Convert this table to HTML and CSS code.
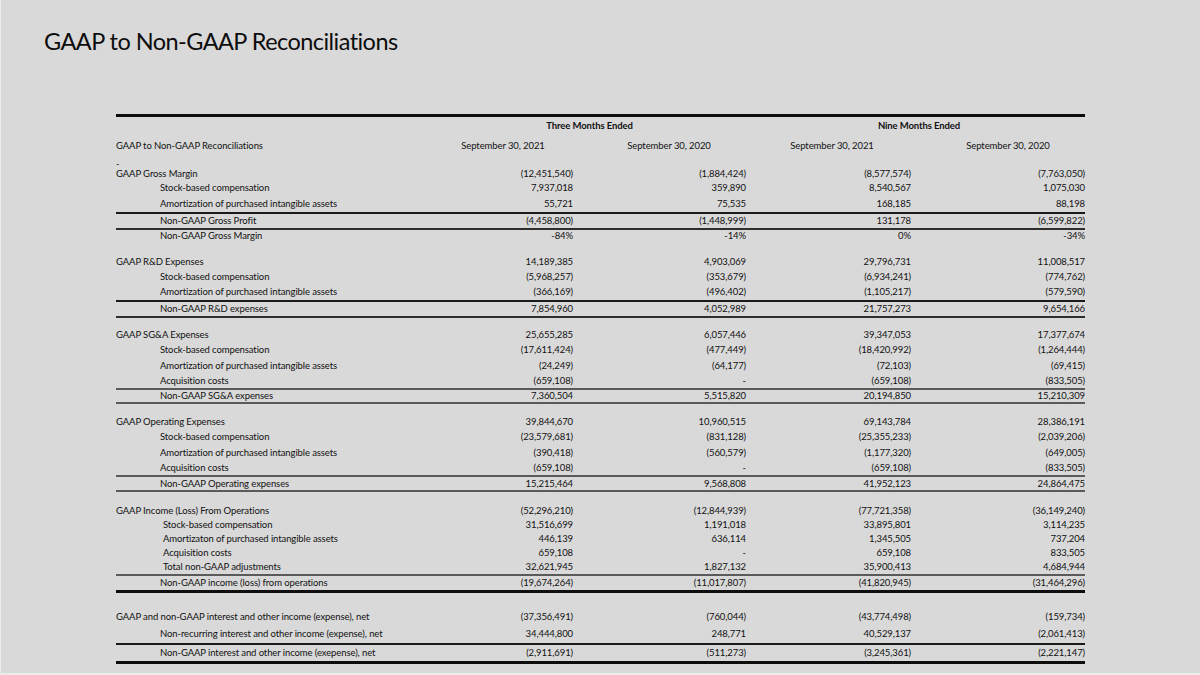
FILE: index.html
```html
<!DOCTYPE html>
<html>
<head>
<meta charset="utf-8">
<link rel="stylesheet" href="styles.css">
</head>
<body>
<div class="slide">
  <h1 class="title">GAAP to Non-GAAP Reconciliations</h1>
  <div class="table">
    <div class="row h18 head">
      <div></div>
      <div class="span bold">Three Months Ended</div>
      <div class="span bold c3">Nine Months Ended</div>
    </div>
    <div class="row h21">
      <div>GAAP to Non-GAAP Reconciliations</div>
      <div class="d">September 30, 2021</div>
      <div class="d c2">September 30, 2020</div>
      <div class="d c3">September 30, 2021</div>
      <div class="d c4">September 30, 2020</div>
    </div>
    <div class="row h12 dashrow"><div class="dash">-</div></div>

    <div class="row h12"><div>GAAP Gross Margin</div><div class="n">(12,451,540)</div><div class="n">(1,884,424)</div><div class="n">(8,577,574)</div><div class="n">(7,763,050)</div></div>
    <div class="row h16"><div class="ind">Stock-based compensation</div><div class="n">7,937,018</div><div class="n">359,890</div><div class="n">8,540,567</div><div class="n">1,075,030</div></div>
    <div class="row h16 l-black"><div class="ind">Amortization of purchased intangible assets</div><div class="n">55,721</div><div class="n">75,535</div><div class="n">168,185</div><div class="n">88,198</div></div>
    <div class="row h14 l-dark"><div class="ind">Non-GAAP Gross Profit</div><div class="n">(4,458,800)</div><div class="n">(1,448,999)</div><div class="n">131,178</div><div class="n">(6,599,822)</div></div>
    <div class="row h12"><div class="ind">Non-GAAP Gross Margin</div><div class="n">-84%</div><div class="n">-14%</div><div class="n">0%</div><div class="n">-34%</div></div>
    <div class="gap13"></div>

    <div class="row h14"><div>GAAP R&amp;D Expenses</div><div class="n">14,189,385</div><div class="n">4,903,069</div><div class="n">29,796,731</div><div class="n">11,008,517</div></div>
    <div class="row h15"><div class="ind">Stock-based compensation</div><div class="n">(5,968,257)</div><div class="n">(353,679)</div><div class="n">(6,934,241)</div><div class="n">(774,762)</div></div>
    <div class="row h16 l-black"><div class="ind">Amortization of purchased intangible assets</div><div class="n">(366,169)</div><div class="n">(496,402)</div><div class="n">(1,105,217)</div><div class="n">(579,590)</div></div>
    <div class="row h14 l-dark"><div class="ind">Non-GAAP R&amp;D expenses</div><div class="n">7,854,960</div><div class="n">4,052,989</div><div class="n">21,757,273</div><div class="n">9,654,166</div></div>
    <div class="gap10"></div>

    <div class="row h14"><div>GAAP SG&amp;A Expenses</div><div class="n">25,655,285</div><div class="n">6,057,446</div><div class="n">39,347,053</div><div class="n">17,377,674</div></div>
    <div class="row h15"><div class="ind">Stock-based compensation</div><div class="n">(17,611,424)</div><div class="n">(477,449)</div><div class="n">(18,420,992)</div><div class="n">(1,264,444)</div></div>
    <div class="row h17"><div class="ind">Amortization of purchased intangible assets</div><div class="n">(24,249)</div><div class="n">(64,177)</div><div class="n">(72,103)</div><div class="n">(69,415)</div></div>
    <div class="row h14 l-gray"><div class="ind">Acquisition costs</div><div class="n">(659,108)</div><div class="n">-</div><div class="n">(659,108)</div><div class="n">(833,505)</div></div>
    <div class="row h12 l-gray"><div class="ind">Non-GAAP SG&amp;A expenses</div><div class="n">7,360,504</div><div class="n">5,515,820</div><div class="n">20,194,850</div><div class="n">15,210,309</div></div>
    <div class="gap11"></div>

    <div class="row h14"><div>GAAP Operating Expenses</div><div class="n">39,844,670</div><div class="n">10,960,515</div><div class="n">69,143,784</div><div class="n">28,386,191</div></div>
    <div class="row h16"><div class="ind">Stock-based compensation</div><div class="n">(23,579,681)</div><div class="n">(831,128)</div><div class="n">(25,355,233)</div><div class="n">(2,039,206)</div></div>
    <div class="row h16"><div class="ind">Amortization of purchased intangible assets</div><div class="n">(390,418)</div><div class="n">(560,579)</div><div class="n">(1,177,320)</div><div class="n">(649,005)</div></div>
    <div class="row h14 l-gray"><div class="ind">Acquisition costs</div><div class="n">(659,108)</div><div class="n">-</div><div class="n">(659,108)</div><div class="n">(833,505)</div></div>
    <div class="row h13 l-gray"><div class="ind">Non-GAAP Operating expenses</div><div class="n">15,215,464</div><div class="n">9,568,808</div><div class="n">41,952,123</div><div class="n">24,864,475</div></div>
    <div class="gap12"></div>

    <div class="row h14"><div>GAAP Income (Loss) From Operations</div><div class="n">(52,296,210)</div><div class="n">(12,844,939)</div><div class="n">(77,721,358)</div><div class="n">(36,149,240)</div></div>
    <div class="row h13"><div class="ind2">Stock-based compensation</div><div class="n">31,516,699</div><div class="n">1,191,018</div><div class="n">33,895,801</div><div class="n">3,114,235</div></div>
    <div class="row h15"><div class="ind2">Amortizaton of purchased intangible assets</div><div class="n">446,139</div><div class="n">636,114</div><div class="n">1,345,505</div><div class="n">737,204</div></div>
    <div class="row h14"><div class="ind2">Acquisition costs</div><div class="n">659,108</div><div class="n">-</div><div class="n">659,108</div><div class="n">833,505</div></div>
    <div class="row h14 l-gray"><div class="ind2">Total non-GAAP adjustments</div><div class="n">32,621,945</div><div class="n">1,827,132</div><div class="n">35,900,413</div><div class="n">4,684,944</div></div>
    <div class="row h14 l-thick"><div class="ind">Non-GAAP income (loss) from operations</div><div class="n">(19,674,264)</div><div class="n">(11,017,807)</div><div class="n">(41,820,945)</div><div class="n">(31,464,296)</div></div>
    <div class="gap15"></div>

    <div class="row h17"><div>GAAP and non-GAAP interest and other income (expense), net</div><div class="n">(37,356,491)</div><div class="n">(760,044)</div><div class="n">(43,774,498)</div><div class="n">(159,734)</div></div>
    <div class="row h18 l-black"><div class="ind">Non-recurring interest and other income (expense), net</div><div class="n">34,444,800</div><div class="n">248,771</div><div class="n">40,529,137</div><div class="n">(2,061,413)</div></div>
    <div class="row h16 l-thick"><div class="ind">Non-GAAP interest and other income (exepense), net</div><div class="n">(2,911,691)</div><div class="n">(511,273)</div><div class="n">(3,245,361)</div><div class="n">(2,221,147)</div></div>
  </div>
</div>
</body>
</html>
```

FILE: styles.css
```css
* { box-sizing: border-box; }
html, body { margin: 0; padding: 0; }
body {
  background: #ececec;
  width: 1200px;
  height: 675px;
  overflow: hidden;
  font-family: "Lato", "Liberation Sans", sans-serif;
  color: #111;
}
.slide {
  margin-left: 1px;
  width: 1199px;
  height: 673px;
  background: #d9d9d9;
  padding-top: 27px;
}
.title {
  margin: 0 0 0 43px;
  font-weight: 400;
  font-size: 23.5px;
  letter-spacing: -0.55px;
  line-height: 29px;
  height: 29px;
  color: #0d0d0d;
}
.table {
  margin: 58px 0 0 115px;
  width: 969px;
  border-top: 3px solid #0d0d0d;
  font-size: 9.5px;
  letter-spacing: -0.1px;
}
.row {
  display: grid;
  grid-template-columns: 317px 140px 173px 165px 174px;
  align-items: center;
  line-height: 12px;
  white-space: nowrap;
}
.head .span { grid-column: span 2; text-align: center; }
.head .span.c3 { padding-left: 7px; }
.bold { font-weight: 700; }
.d { text-align: center; }
.c2 { padding-left: 19px; }
.c3 { padding-left: 7px; }
.c4 { padding-left: 20px; }
.n { text-align: right; }
.ind { padding-left: 44px; }
.ind2 { padding-left: 47px; }
.dashrow { padding-top: 2px; }
.dash { font-size: 9px; }

.h12 { height: 12px; }
.h13 { height: 13px; }
.h14 { height: 14px; }
.h15 { height: 15px; }
.h16 { height: 16px; }
.h17 { height: 17px; }
.h18 { height: 18px; }
.h21 { height: 21px; }

.l-black { border-bottom: 2px solid #1a1a1a; }
.l-dark { border-bottom: 2px solid #2e2e2e; }
.l-gray { border-bottom: 2px solid #5a5a5a; }
.l-thick { border-bottom: 3px solid #0d0d0d; }

.row.l-black.h16 { height: 18px; }
.row.l-black.h18 { height: 20px; }
.row.l-dark.h14 { height: 16px; }
.row.l-gray.h14 { height: 16px; }
.row.l-gray.h12 { height: 14px; }
.row.l-gray.h13 { height: 15px; }
.row.l-thick.h14 { height: 17px; }
.row.l-thick.h16 { height: 19px; }

.gap10 { height: 10px; }
.gap11 { height: 11px; }
.gap12 { height: 12px; }
.gap13 { height: 13px; }
.gap15 { height: 15px; }
```
